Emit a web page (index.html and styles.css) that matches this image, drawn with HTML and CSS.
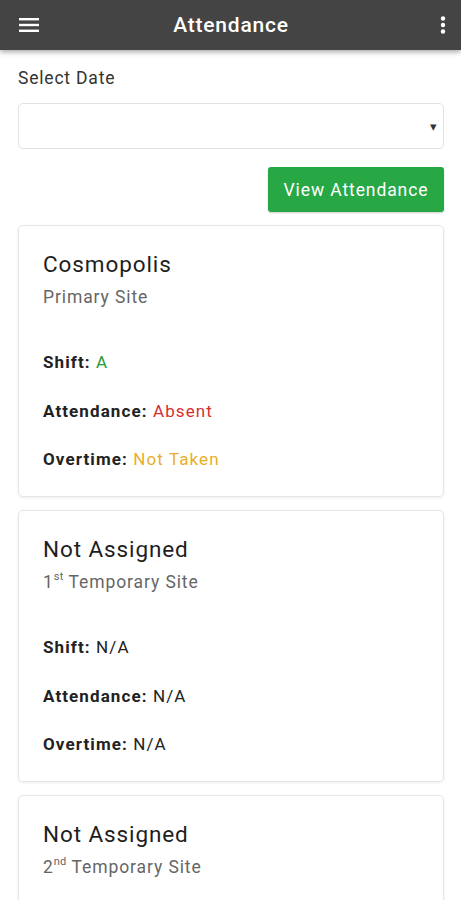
FILE: index.html
```html
<!DOCTYPE html>
<html>
<head>
<meta charset="utf-8">
<title>Attendance</title>
<link rel="stylesheet" href="styles.css">
</head>
<body>
<header class="appbar">
  <button class="icon-btn" aria-label="Menu">
    <svg width="20" height="16" viewBox="0 0 20 16"><rect x="0" y="1" width="20" height="2.4" fill="#fff"/><rect x="0" y="6.8" width="20" height="2.4" fill="#fff"/><rect x="0" y="12.6" width="20" height="2.4" fill="#fff"/></svg>
  </button>
  <h1 class="title">Attendance</h1>
  <button class="icon-btn" aria-label="More">
    <svg width="6" height="18" viewBox="0 0 6 18"><circle cx="3" cy="2.5" r="2.2" fill="#fff"/><circle cx="3" cy="9" r="2.2" fill="#fff"/><circle cx="3" cy="15.5" r="2.2" fill="#fff"/></svg>
  </button>
</header>

<main class="content">
  <label class="field-label">Select Date</label>
  <div class="select">
    <span class="caret">▾</span>
  </div>
  <div class="actions">
    <button class="btn-green">View Attendance</button>
  </div>

  <section class="card">
    <h2 class="site-name">Cosmopolis</h2>
    <p class="site-type">Primary Site</p>
    <div class="rows">
      <p class="row"><b>Shift:</b> <span class="green">A</span></p>
      <p class="row"><b>Attendance:</b> <span class="red">Absent</span></p>
      <p class="row"><b>Overtime:</b> <span class="yellow">Not Taken</span></p>
    </div>
  </section>

  <section class="card">
    <h2 class="site-name">Not Assigned</h2>
    <p class="site-type">1<sup>st</sup> Temporary Site</p>
    <div class="rows">
      <p class="row"><b>Shift:</b> N/A</p>
      <p class="row"><b>Attendance:</b> N/A</p>
      <p class="row"><b>Overtime:</b> N/A</p>
    </div>
  </section>

  <section class="card card-last">
    <h2 class="site-name">Not Assigned</h2>
    <p class="site-type">2<sup>nd</sup> Temporary Site</p>
  </section>
</main>
</body>
</html>
```

FILE: styles.css
```css
* { box-sizing: border-box; }
html, body { margin: 0; padding: 0; }
body {
  font-family: Roboto, "Noto Sans", "Liberation Sans", sans-serif;
  background: #fff;
  color: #212121;
}
.appbar {
  height: 50px;
  background: #444;
  display: flex;
  align-items: center;
  justify-content: space-between;
  padding: 0 18px;
  box-shadow: 0 2px 5px rgba(0,0,0,0.35);
  position: relative;
  z-index: 2;
}
.icon-btn {
  background: none;
  border: 0;
  padding: 0;
  display: flex;
  align-items: center;
  justify-content: center;
  width: 22px;
  height: 24px;
}
.appbar .icon-btn:last-child { justify-content: flex-end; width: 20px; margin-right: -3px; }
.title {
  margin: 0 4px 0 0;
  color: #fff;
  font-size: 21px;
  font-weight: 500;
  letter-spacing: 0.8px;
}
.content {
  padding: 17px 17px 0 18px;
  display: flex;
  flex-direction: column;
}
.field-label {
  font-size: 17.5px;
  line-height: 22px;
  letter-spacing: 0.8px;
  color: #333;
}
.select {
  margin-top: 14px;
  height: 46px;
  border: 1px solid #e2e2e2;
  border-radius: 5px;
  display: flex;
  align-items: center;
  justify-content: flex-end;
  padding-right: 6px;
}
.caret {
  font-size: 13px;
  color: #333;
}
.actions {
  display: flex;
  justify-content: flex-end;
  margin-top: 18px;
}
.btn-green {
  background: #28a745;
  color: #fff;
  border: 0;
  border-radius: 3px;
  height: 45px;
  width: 176px;
  font-family: inherit;
  font-size: 17.5px;
  letter-spacing: 0.9px;
  padding: 0;
  box-shadow: 0 1px 2px rgba(0,0,0,0.2);
}
.card {
  margin-top: 13px;
  border: 1px solid #e6e6e6;
  border-radius: 5px;
  box-shadow: 0 1px 3px rgba(0,0,0,0.08);
  padding: 25px 24px 26px 24px;
  height: 272px;
}
.card-last { height: 120px; }
.site-name {
  margin: 0;
  font-size: 22.5px;
  line-height: 26px;
  font-weight: 400;
  letter-spacing: 0.9px;
  color: #1e1e1e;
}
.site-type {
  margin: 9px 0 0 0;
  font-size: 17.5px;
  line-height: 22px;
  letter-spacing: 0.9px;
  color: #666;
}
.site-type sup {
  font-size: 11px;
  line-height: 0;
  letter-spacing: 0.3px;
  position: relative;
  top: -1px;
}
.rows {
  margin-top: 42px;
  display: flex;
  flex-direction: column;
  gap: 24.5px;
}
.row {
  margin: 0;
  font-size: 17px;
  line-height: 24px;
  letter-spacing: 1.1px;
  color: #222;
}
.row b { font-weight: 700; }
.green { color: #2a9a3a; }
.red { color: #d32f2f; }
.yellow { color: #e8ae2a; }
```
